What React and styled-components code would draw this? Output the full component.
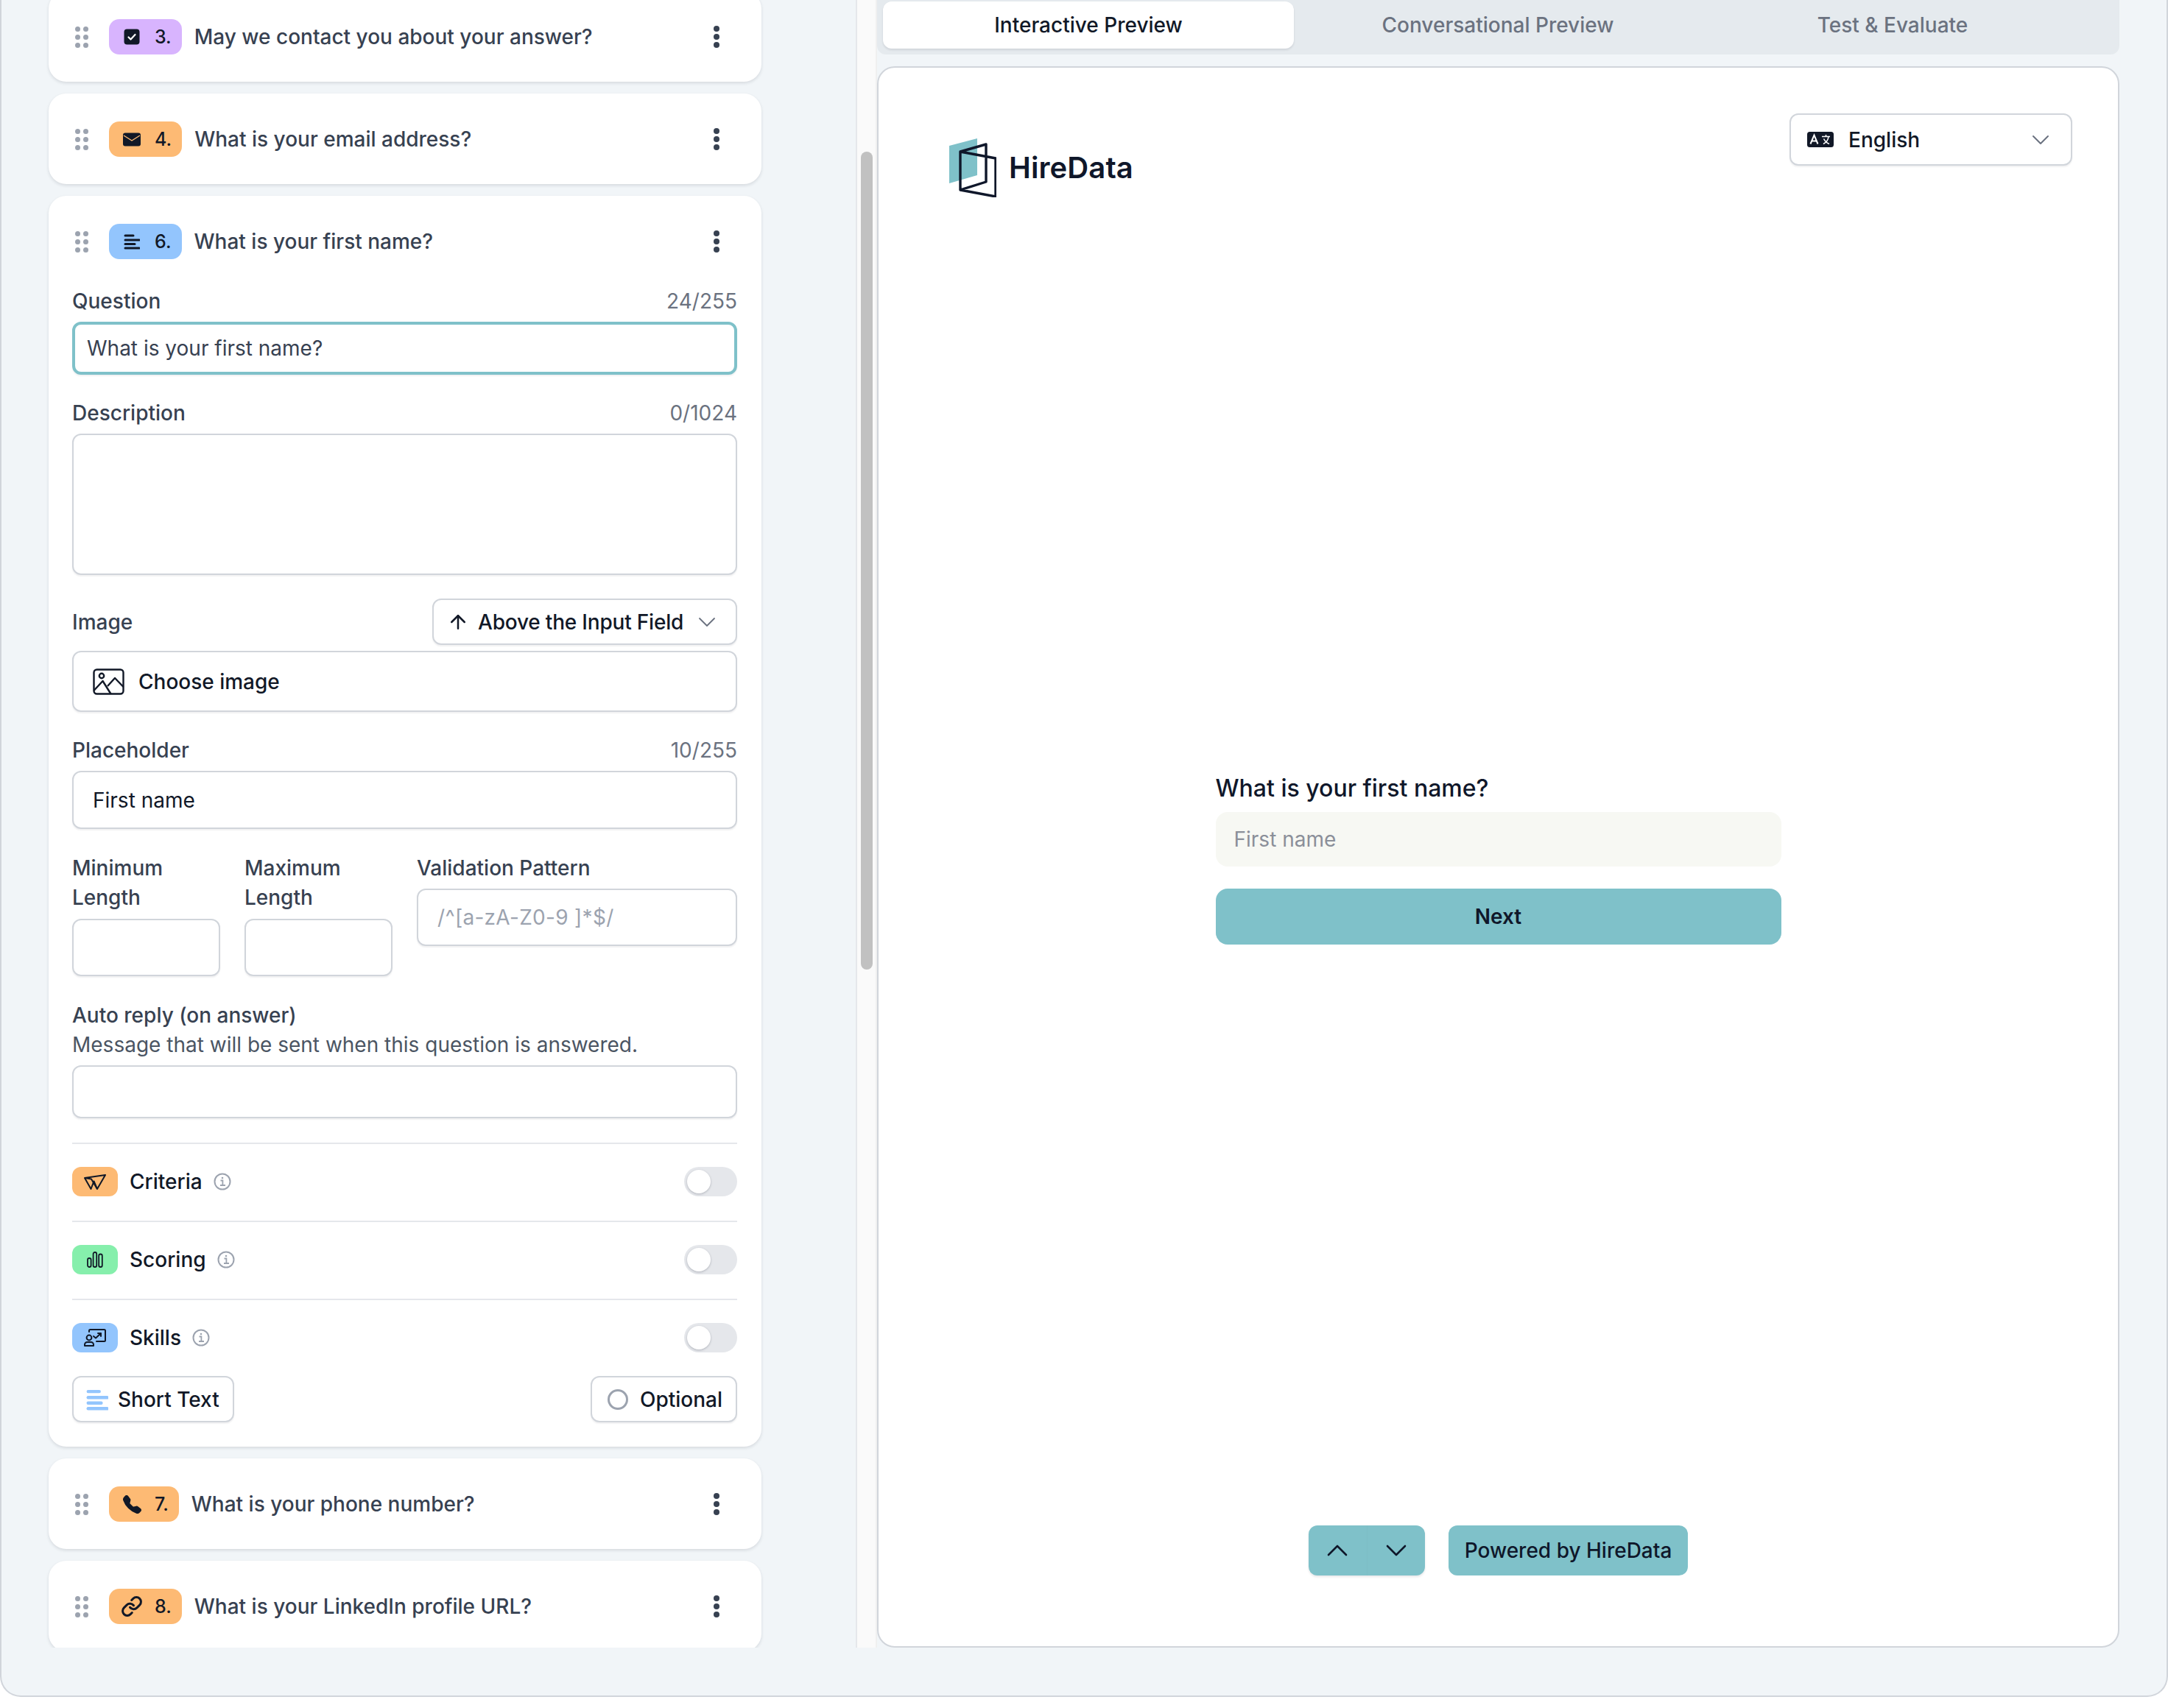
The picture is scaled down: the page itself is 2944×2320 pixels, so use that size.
import React from 'react';
import styled, { createGlobalStyle } from 'styled-components';
import { ArrowUp, ChevronDown, ChevronUp, Link as LinkIcon } from 'lucide-react';
import { BsTelephoneFill } from 'react-icons/bs';

const GlobalStyle = createGlobalStyle`
  html, body {
    margin: 0;
    padding: 0;
    background: #ffffff;
  }
  body {
    font-family: Inter, "Liberation Sans", sans-serif;
    font-size: 28px;
    line-height: 40px;
    color: #111827;
  }
  * {
    box-sizing: border-box;
  }
`;

const Frame = styled.div`
  width: 2944px;
  height: 2305px;
  background: #f1f5f8;
  border: 2px solid #d1d5db;
  border-top: none;
  border-radius: 0 0 28px 28px;
  display: grid;
  grid-template-columns: 1160px 29px 1687px;
  grid-template-rows: 2238px;
  overflow: hidden;
`;

const ListColumn = styled.div`
  padding-left: 64px;
  overflow: hidden;
`;

const List = styled.div`
  width: 968px;
  margin-top: -12px;
  display: flex;
  flex-direction: column;
  gap: 16px;
`;

const ScrollTrack = styled.div`
  background: #fafafa;
  border-left: 2px solid #e5e7eb;
  border-right: 2px solid #f0f0f0;
  padding-top: 206px;
  padding-left: 5px;
`;

const ScrollThumb = styled.div`
  width: 16px;
  height: 1111px;
  border-radius: 8px;
  background: #c1c1c1;
`;

const Card = styled.div`
  flex-shrink: 0;
  background: #ffffff;
  border-radius: 24px;
  box-shadow: 0 2px 4px rgba(15, 23, 42, 0.12);
  padding: 38px 33px ${(p) => p.$bottom || 37}px 32px;
`;

const CardHeader = styled.div`
  display: flex;
  align-items: center;
  height: 48px;
`;

const Grip = styled.div`
  display: grid;
  grid-template-columns: 7px 7px;
  grid-auto-rows: 7px;
  gap: 4px;
  margin: 0 28px 0 4px;
  span {
    border-radius: 50%;
    background: #9ca3af;
  }
`;

const Badge = styled.div`
  display: flex;
  align-items: center;
  gap: 20px;
  height: 48px;
  padding: 0 14px 0 20px;
  border-radius: 14px;
  background: ${(p) => p.$color};
  font-size: 25px;
  font-weight: 500;
  color: #111827;
`;

const BadgeIcon = styled.div`
  width: 22px;
  height: 24px;
  display: flex;
  align-items: center;
  justify-content: center;
  color: #111827;
`;

const CardTitle = styled.div`
  flex: 1;
  margin-left: 17px;
  font-weight: 500;
  color: #374151;
`;

const Kebab = styled.div`
  display: flex;
  flex-direction: column;
  gap: 3px;
  margin-right: 24px;
  span {
    width: 8px;
    height: 8px;
    border-radius: 50%;
    background: #374151;
  }
`;

const Body = styled.div`
  margin-top: 37px;
  display: flex;
  flex-direction: column;
`;

const Field = styled.div`
  margin-top: ${(p) => p.$top || 0}px;
`;

const LabelRow = styled.div`
  display: flex;
  justify-content: space-between;
  align-items: center;
  margin-bottom: ${(p) => p.$bottom || 8}px;
`;

const Label = styled.div`
  font-weight: 500;
  color: #374151;
`;

const Counter = styled.div`
  color: #6b7280;
`;

const Hint = styled.div`
  color: #4b5563;
  margin-bottom: 8px;
`;

const InputBox = styled.div`
  height: ${(p) => p.$height || 78}px;
  display: flex;
  align-items: center;
  padding-left: 26px;
  background: #ffffff;
  border: 2px solid #d1d5db;
  border-radius: 12px;
  box-shadow: 0 2px 2px rgba(15, 23, 42, 0.06);
  color: ${(p) => p.$muted ? '#9ca3af' : '#111827'};
  letter-spacing: ${(p) => p.$muted ? '0.3px' : 'normal'};
`;

const FocusedInput = styled(InputBox)`
  border: 4px solid #7fc1c9;
  padding-left: 16px;
  color: #374151;
`;

const ImageRow = styled.div`
  display: flex;
  justify-content: space-between;
  align-items: center;
`;

const SelectBox = styled.div`
  width: 414px;
  height: 63px;
  display: flex;
  align-items: center;
  padding: 0 19px 0 18px;
  background: #ffffff;
  border: 2px solid #d1d5db;
  border-radius: 12px;
  box-shadow: 0 2px 2px rgba(15, 23, 42, 0.06);
  font-weight: 500;
  letter-spacing: -0.2px;
  color: #111827;
  svg:first-child {
    margin-right: 12px;
  }
  svg:last-child {
    margin-left: auto;
    color: #6b7280;
  }
`;

const ChooseImage = styled(InputBox)`
  margin-top: 8px;
  gap: 19px;
  font-weight: 500;
`;

const LengthGrid = styled.div`
  margin-top: 33px;
  display: grid;
  grid-template-columns: 201px 201px 435px;
  column-gap: 33px;
  align-items: start;
`;

const Divider = styled.div`
  height: 2px;
  background: #e5e7eb;
  margin-top: 33px;
`;

const OptionRow = styled.div`
  display: flex;
  align-items: center;
  height: 40px;
  margin-top: 31px;
`;

const OptionBadge = styled.div`
  width: 62px;
  height: 40px;
  display: flex;
  align-items: center;
  justify-content: center;
  border-radius: 12px;
  background: ${(p) => p.$color};
`;

const OptionLabel = styled.div`
  margin: 0 15px 0 16px;
  font-weight: 500;
  color: #111827;
`;

const Toggle = styled.div`
  margin-left: auto;
  width: 72px;
  height: 40px;
  padding: 4px;
  border-radius: 20px;
  background: #e5e7eb;
  span {
    display: block;
    width: 32px;
    height: 32px;
    border-radius: 50%;
    background: #ffffff;
    box-shadow: 0 1px 3px rgba(15, 23, 42, 0.25);
  }
`;

const ButtonRow = styled.div`
  display: flex;
  justify-content: space-between;
  margin-top: 32px;
`;

const TypeButton = styled.div`
  height: 63px;
  display: flex;
  align-items: center;
  gap: ${(p) => p.$gap}px;
  padding: 0 18px 0 17px;
  background: #ffffff;
  border: 2px solid #d1d5db;
  border-radius: 12px;
  box-shadow: 0 2px 2px rgba(15, 23, 42, 0.06);
  font-weight: 500;
  color: #111827;
`;

const Radio = styled.div`
  width: 28px;
  height: 28px;
  margin-left: 4px;
  border-radius: 50%;
  border: 3px solid #9ca3af;
`;

const PreviewColumn = styled.div`
  display: flex;
  flex-direction: column;
  gap: 16px;
`;

const Tabs = styled.div`
  height: 74px;
  display: flex;
  padding: 2px 3px 8px 8px;
  background: #e5eaee;
  border-radius: 0 0 12px 12px;
`;

const Tab = styled.div`
  width: ${(p) => p.$width}px;
  display: flex;
  align-items: center;
  justify-content: center;
  border-radius: 12px;
  font-weight: 500;
  color: ${(p) => p.$active ? '#111827' : '#6b7280'};
  background: ${(p) => p.$active ? '#ffffff' : 'transparent'};
  box-shadow: ${(p) => p.$active ? '0 2px 3px rgba(15, 23, 42, 0.1)' : 'none'};
`;

const Preview = styled.div`
  flex: 1;
  display: flex;
  flex-direction: column;
  padding: 62px 62px 96px;
  background: #ffffff;
  border: 2px solid #d1d5db;
  border-radius: 24px;
`;

const PreviewHeader = styled.div`
  display: flex;
  justify-content: space-between;
  align-items: flex-start;
`;

const Logo = styled.div`
  display: flex;
  align-items: flex-start;
  gap: 17px;
  margin: 34px 0 0 34px;
`;

const LogoName = styled.div`
  margin-top: 20px;
  font-size: 40px;
  line-height: 40px;
  font-weight: 600;
  letter-spacing: 0.1px;
  color: #0f172a;
`;

const LanguageSelect = styled.div`
  width: 384px;
  height: 71px;
  display: flex;
  align-items: center;
  gap: 20px;
  padding: 0 21px 0 22px;
  background: #ffffff;
  border: 2px solid #d1d5db;
  border-radius: 12px;
  box-shadow: 0 2px 2px rgba(15, 23, 42, 0.06);
  font-weight: 500;
  color: #111827;
  svg:last-child {
    margin-left: auto;
    color: #6b7280;
  }
`;

const Stage = styled.div`
  flex: 1;
  display: flex;
  justify-content: center;
  padding-top: 783px;
`;

const Form = styled.div`
  width: 768px;
`;

const FormTitle = styled.div`
  font-size: 32px;
  font-weight: 500;
  color: #0f172a;
  margin-bottom: 12px;
`;

const FormInput = styled.div`
  height: 74px;
  display: flex;
  align-items: center;
  padding-left: 25px;
  border-radius: 16px;
  background: #f7f8f3;
  color: #8b8f99;
`;

const NextButton = styled.div`
  height: 76px;
  margin-top: 30px;
  display: flex;
  align-items: center;
  justify-content: center;
  border-radius: 16px;
  background: #7fc1c9;
  font-weight: 600;
  color: #0f172a;
`;

const PreviewFooter = styled.div`
  display: flex;
  justify-content: center;
  gap: 32px;
`;

const NavGroup = styled.div`
  display: flex;
  height: 68px;
  border-radius: 12px;
  overflow: hidden;
  background: #7fc1c9;
  box-shadow: 0 2px 3px rgba(15, 23, 42, 0.1);
`;

const NavButton = styled.div`
  width: 79px;
  display: flex;
  align-items: center;
  justify-content: center;
  color: #0f172a;
  & + & {
    border-left: 1px solid #7dbec6;
  }
`;

const PoweredBy = styled.div`
  height: 68px;
  display: flex;
  align-items: center;
  padding: 0 22px;
  border-radius: 12px;
  background: #7fc1c9;
  font-weight: 500;
  color: #0f172a;
`;

const CheckIcon = () => (
  <svg width="22" height="22" viewBox="0 0 22 22">
    <rect width="21" height="21" x="0.5" y="0.5" rx="4" fill="#111827" />
    <path d="M6.5 11.5l3 3 6-6.5" fill="none" stroke="#ffffff" strokeWidth="2.2" strokeLinecap="round" strokeLinejoin="round" />
  </svg>
);

const MailIcon = () => (
  <svg width="24" height="19" viewBox="0 0 24 19" style={{ flexShrink: 0 }}>
    <rect width="24" height="18" y="0.5" rx="3" fill="#111827" />
    <path d="M1 4l11 7 11-7" fill="none" stroke="#fdba74" strokeWidth="1.4" />
  </svg>
);

const LinesIcon = ({ color = 'currentColor', size = 22, stroke = 3 }) => (
  <svg width={size} height={size} viewBox="0 0 22 22">
    <g stroke={color} strokeWidth={stroke} strokeLinecap="round">
      <path d="M2 3h11" />
      <path d="M2 9h19" />
      <path d="M2 14.5h13" />
      <path d="M2 20h19" />
    </g>
  </svg>
);

const ImageIcon = () => (
  <svg width="43" height="36" viewBox="0 0 43 36" fill="none" stroke="#111827" strokeWidth="2.4" strokeLinejoin="round">
    <rect x="1.5" y="1.5" width="40" height="33" rx="4" />
    <circle cx="12" cy="10" r="3.2" />
    <path d="M1.5 30l12-13 11 17.5M20 24l10-11 11.5 12" />
  </svg>
);

const FunnelIcon = () => (
  <svg width="30" height="21" viewBox="0 0 30 21" fill="none" stroke="#111827" strokeWidth="2" strokeLinejoin="round">
    <path d="M1 5L29 1 18 20 13.5 9.5 9.5 20z" />
    <path d="M1 5l9 1.5L18 20" />
  </svg>
);

const BarsIcon = () => (
  <svg width="22" height="22" viewBox="0 0 22 22" fill="none" stroke="#111827" strokeWidth="1.8">
    <rect x="1" y="9" width="4.6" height="12" rx="2.3" />
    <rect x="8.6" y="1" width="4.6" height="20" rx="2.3" />
    <rect x="16.2" y="3.5" width="4.6" height="17.5" rx="2.3" />
  </svg>
);

const SkillsIcon = () => (
  <svg width="30" height="24" viewBox="0 0 30 24" fill="none" stroke="#111827" strokeWidth="2" strokeLinecap="round" strokeLinejoin="round">
    <path d="M7 4V2.5A1.5 1.5 0 0 1 8.5 1h19A1.5 1.5 0 0 1 29 2.5v13a1.5 1.5 0 0 1-1.5 1.5H17" />
    <circle cx="7" cy="12" r="3.4" />
    <path d="M1 23v-1.5A3.5 3.5 0 0 1 4.5 18h5a3.5 3.5 0 0 1 3.5 3.5V23z" />
    <path d="M13 10l3 2.5L23 6M19 6h4v4" />
  </svg>
);

const InfoIcon = () => (
  <svg width="24" height="24" viewBox="0 0 24 24" fill="none" stroke="#9ca3af" strokeWidth="2">
    <circle cx="12" cy="12" r="10.5" />
    <path d="M9.5 10.5H12.4V17M9 17h7" strokeWidth="1.8" />
    <circle cx="12" cy="7" r="1.3" fill="#9ca3af" stroke="none" />
  </svg>
);

const TranslateIcon = () => (
  <svg width="36" height="21" viewBox="0 0 36 21">
    <rect width="36" height="21" rx="3.5" fill="#111827" />
    <path d="M4.5 16.5L9.5 4.5 14.5 16.5M6.5 12.5H12.5" fill="none" stroke="#ffffff" strokeWidth="2" />
    <path d="M20 6.5h11M25.5 4v2.5M22 16.5c4-2 6.5-5.5 7-10M22.5 9.5c1.5 3 3.5 5.5 7.5 7" fill="none" stroke="#ffffff" strokeWidth="1.6" />
  </svg>
);

const HireDataMark = () => (
  <svg width="64" height="80" viewBox="0 0 64 80" style={{ flexShrink: 0 }}>
    <path d="M0 10L38 0V50L0 61z" fill="#7fc1c9" />
    <path d="M15 18L50 8V59L15 70zM15 18L63 27V79L15 70z" fill="none" stroke="#0f172a" strokeWidth="3.4" strokeLinejoin="round" />
  </svg>
);

const GripDots = () => (
  <Grip>
    {[0, 1, 2, 3, 4, 5].map((n) => <span key={n} />)}
  </Grip>
);

const Header = ({ color, icon, number, title }) => (
  <CardHeader>
    <GripDots />
    <Badge $color={color}>
      <BadgeIcon>{icon}</BadgeIcon>
      {number}
    </Badge>
    <CardTitle>{title}</CardTitle>
    <Kebab><span /><span /><span /></Kebab>
  </CardHeader>
);

const options = [
  { name: 'Criteria', color: '#fdba74', icon: <FunnelIcon /> },
  { name: 'Scoring', color: '#86efac', icon: <BarsIcon /> },
  { name: 'Skills', color: '#93c5fd', icon: <SkillsIcon /> },
];

export default function App() {
  return (
    <>
      <GlobalStyle />
      <Frame>
        <ListColumn>
          <List>
            <Card>
              <Header color="#d8b4fe" icon={<CheckIcon />} number="3." title="May we contact you about your answer?" />
            </Card>
            <Card>
              <Header color="#fdba74" icon={<MailIcon />} number="4." title="What is your email address?" />
            </Card>
            <Card $bottom={33}>
              <Header color="#93c5fd" icon={<LinesIcon />} number="6." title="What is your first name?" />
              <Body>
                <LabelRow>
                  <Label>Question</Label>
                  <Counter>24/255</Counter>
                </LabelRow>
                <FocusedInput $height={72}>What is your first name?</FocusedInput>

                <Field $top={32}>
                  <LabelRow>
                    <Label>Description</Label>
                    <Counter>0/1024</Counter>
                  </LabelRow>
                  <InputBox $height={192} />
                </Field>

                <Field $top={32}>
                  <ImageRow>
                    <Label>Image</Label>
                    <SelectBox>
                      <ArrowUp size={30} strokeWidth={2} />
                      Above the Input Field
                      <ChevronDown size={40} strokeWidth={1.1} />
                    </SelectBox>
                  </ImageRow>
                  <ChooseImage $height={83}>
                    <ImageIcon />
                    Choose image
                  </ChooseImage>
                </Field>

                <Field $top={32}>
                  <LabelRow>
                    <Label>Placeholder</Label>
                    <Counter>10/255</Counter>
                  </LabelRow>
                  <InputBox $height={79}>First name</InputBox>
                </Field>

                <LengthGrid>
                  <div>
                    <LabelRow $bottom={9}><Label>Minimum Length</Label></LabelRow>
                    <InputBox />
                  </div>
                  <div>
                    <LabelRow $bottom={9}><Label>Maximum Length</Label></LabelRow>
                    <InputBox />
                  </div>
                  <div>
                    <LabelRow $bottom={8}><Label>Validation Pattern</Label></LabelRow>
                    <InputBox $muted>/^[a-zA-Z0-9 ]*$/</InputBox>
                  </div>
                </LengthGrid>

                <Field $top={33}>
                  <Label>Auto reply (on answer)</Label>
                  <Hint>Message that will be sent when this question is answered.</Hint>
                  <InputBox $height={72} />
                </Field>

                {options.map((item) => (
                  <React.Fragment key={item.name}>
                    <Divider />
                    <OptionRow>
                      <OptionBadge $color={item.color}>{item.icon}</OptionBadge>
                      <OptionLabel>{item.name}</OptionLabel>
                      <InfoIcon />
                      <Toggle><span /></Toggle>
                    </OptionRow>
                  </React.Fragment>
                ))}

                <ButtonRow>
                  <TypeButton $gap={13}>
                    <LinesIcon color="#93c5fd" size={30} stroke={3.2} />
                    Short Text
                  </TypeButton>
                  <TypeButton $gap={16}>
                    <Radio />
                    Optional
                  </TypeButton>
                </ButtonRow>
              </Body>
            </Card>
            <Card>
              <Header color="#fdba74" icon={<BsTelephoneFill size={25} style={{ flexShrink: 0 }} />} number="7." title="What is your phone number?" />
            </Card>
            <Card>
              <Header color="#fdba74" icon={<LinkIcon size={30} strokeWidth={2.4} style={{ flexShrink: 0 }} />} number="8." title="What is your LinkedIn profile URL?" />
            </Card>
          </List>
        </ListColumn>

        <ScrollTrack>
          <ScrollThumb />
        </ScrollTrack>

        <PreviewColumn>
          <Tabs>
            <Tab $active $width={558}>Interactive Preview</Tab>
            <Tab $width={554}>Conversational Preview</Tab>
            <Tab $width={518}>Test &amp; Evaluate</Tab>
          </Tabs>
          <Preview>
            <PreviewHeader>
              <Logo>
                <HireDataMark />
                <LogoName>HireData</LogoName>
              </Logo>
              <LanguageSelect>
                <TranslateIcon />
                English
                <ChevronDown size={40} strokeWidth={1.2} />
              </LanguageSelect>
            </PreviewHeader>
            <Stage>
              <Form>
                <FormTitle>What is your first name?</FormTitle>
                <FormInput>First name</FormInput>
                <NextButton>Next</NextButton>
              </Form>
            </Stage>
            <PreviewFooter>
              <NavGroup>
                <NavButton><ChevronUp size={48} strokeWidth={1.3} /></NavButton>
                <NavButton><ChevronDown size={48} strokeWidth={1.3} /></NavButton>
              </NavGroup>
              <PoweredBy>Powered by HireData</PoweredBy>
            </PreviewFooter>
          </Preview>
        </PreviewColumn>
      </Frame>
    </>
  );
}
